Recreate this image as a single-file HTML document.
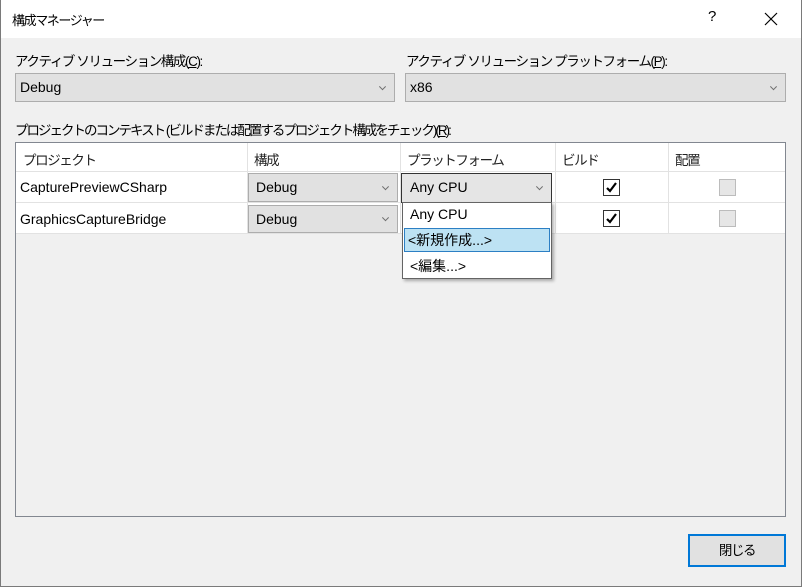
<!DOCTYPE html>
<html><head><style>
*{box-sizing:border-box;margin:0;padding:0}
body{width:802px;height:587px;background:#f0f0f0;font-family:"Liberation Sans","Noto Sans CJK JP",sans-serif;font-size:14px;color:#000;position:relative;overflow:hidden}
.a{position:absolute}
.j{font-size:13.5px;letter-spacing:-1.4px}
.win{position:absolute;left:0;top:0;width:802px;height:587px;border:1px solid #7a7a7a;border-top:none}
.title{left:0;top:0;width:802px;height:38px;background:#fff}
.combo{background:#e1e1e1;border:1px solid #adadad}
.chev{position:absolute;right:9px;top:50%;width:5px;height:5px;border-right:1px solid #707070;border-bottom:1px solid #707070;transform:translateY(-75%) rotate(45deg)}
.cb{width:17px;height:17px;border:1px solid #333;background:#fff}
.cbd{width:17px;height:17px;border:1px solid #bcbcbc;background:#e6e6e6}
</style></head><body>
<div class="a title"></div>
<div class="a j" style="left:12px;top:10px;font-size:13px">構成マネージャー</div>
<div class="a" style="left:708px;top:8px;font-size:15px">?</div>
<svg class="a" style="left:764px;top:12px" width="14" height="14"><path d="M1 1L13 13M13 1L1 13" stroke="#000" stroke-width="1.2"/></svg>
<div class="win"></div>

<div class="a j" style="left:15px;top:50px">アクティブ ソリューション構成(<u>C</u>):</div>
<div class="a combo" style="left:15px;top:73px;width:380px;height:29px"><span class="a" style="left:4px;top:5px">Debug</span><div class="chev"></div></div>
<div class="a j" style="left:406px;top:50px">アクティブ ソリューション プラットフォーム(<u>P</u>):</div>
<div class="a combo" style="left:405px;top:73px;width:381px;height:29px"><span class="a" style="left:4px;top:5px">x86</span><div class="chev"></div></div>

<div class="a j" style="left:15px;top:119px;letter-spacing:-2px">プロジェクトのコンテキスト (ビルドまたは配置するプロジェクト構成をチェック)(<u>R</u>):</div>

<div class="a" style="left:15px;top:142px;width:771px;height:375px;border:1px solid #828790;background:#f0f0f0"></div>
<div class="a" style="left:16px;top:143px;width:769px;height:29px;background:#fff;border-bottom:1px solid #e2e2e2"></div>
<div class="a" style="left:247px;top:143px;width:1px;height:91px;background:#e2e2e2"></div>
<div class="a" style="left:400px;top:143px;width:1px;height:91px;background:#e2e2e2"></div>
<div class="a" style="left:555px;top:143px;width:1px;height:91px;background:#e2e2e2"></div>
<div class="a" style="left:668px;top:143px;width:1px;height:91px;background:#e2e2e2"></div>
<div class="a j" style="left:23px;top:149px;color:#222">プロジェクト</div>
<div class="a j" style="left:254px;top:149px;color:#222">構成</div>
<div class="a j" style="left:407px;top:149px;color:#222">プラットフォーム</div>
<div class="a j" style="left:562px;top:149px;color:#222">ビルド</div>
<div class="a j" style="left:675px;top:149px;color:#222">配置</div>
<div class="a" style="left:16px;top:172px;width:769px;height:31px;background:#fff;border-bottom:1px solid #e2e2e2"></div>
<div class="a" style="left:16px;top:203px;width:769px;height:31px;background:#fff;border-bottom:1px solid #e2e2e2"></div>
<div class="a" style="left:247px;top:172px;width:1px;height:62px;background:#e2e2e2"></div>
<div class="a" style="left:400px;top:172px;width:1px;height:62px;background:#e2e2e2"></div>
<div class="a" style="left:555px;top:172px;width:1px;height:62px;background:#e2e2e2"></div>
<div class="a" style="left:668px;top:172px;width:1px;height:62px;background:#e2e2e2"></div>
<div class="a" style="left:20px;top:179px">CapturePreviewCSharp</div>
<div class="a" style="left:20px;top:211px">GraphicsCaptureBridge</div>
<div class="a combo" style="left:248px;top:173px;width:150px;height:29px"><span class="a" style="left:7px;top:5px">Debug</span><div class="chev"></div></div>
<div class="a combo" style="left:248px;top:205px;width:150px;height:28px"><span class="a" style="left:7px;top:5px">Debug</span><div class="chev"></div></div>
<div class="a combo" style="left:401px;top:173px;width:151px;height:30px;border-color:#333;background:#e5e5e5"><span class="a" style="left:8px;top:5px">Any CPU</span><div class="chev"></div></div>
<div class="a cb" style="left:603px;top:179px"></div>
<div class="a cb" style="left:603px;top:210px"></div>
<svg class="a" style="left:603px;top:179px" width="17" height="17"><path d="M4 9L7 12L13 4" stroke="#000" stroke-width="2.2" fill="none"/></svg>
<svg class="a" style="left:603px;top:210px" width="17" height="17"><path d="M4 9L7 12L13 4" stroke="#000" stroke-width="2.2" fill="none"/></svg>
<div class="a cbd" style="left:719px;top:179px"></div>
<div class="a cbd" style="left:719px;top:210px"></div>
<div class="a" style="left:402px;top:202px;width:150px;height:77px;background:#fff;border:1px solid #646464;box-shadow:2px 2px 3px rgba(0,0,0,.3)"></div>
<div class="a" style="left:410px;top:206px">Any CPU</div>
<div class="a" style="left:404px;top:228px;width:146px;height:24px;background:#bde2f3;border:1px dotted #222;outline:1px solid #2c7fc4;outline-offset:-1px"></div>
<div class="a" style="left:408px;top:230px">&lt;新規作成...&gt;</div>
<div class="a" style="left:410px;top:256px">&lt;編集...&gt;</div>

<div class="a" style="left:688px;top:534px;width:98px;height:33px;background:#e1e1e1;border:2px solid #0078d7;text-align:center;line-height:29px"><span class="j">閉じる</span></div>
</body></html>
